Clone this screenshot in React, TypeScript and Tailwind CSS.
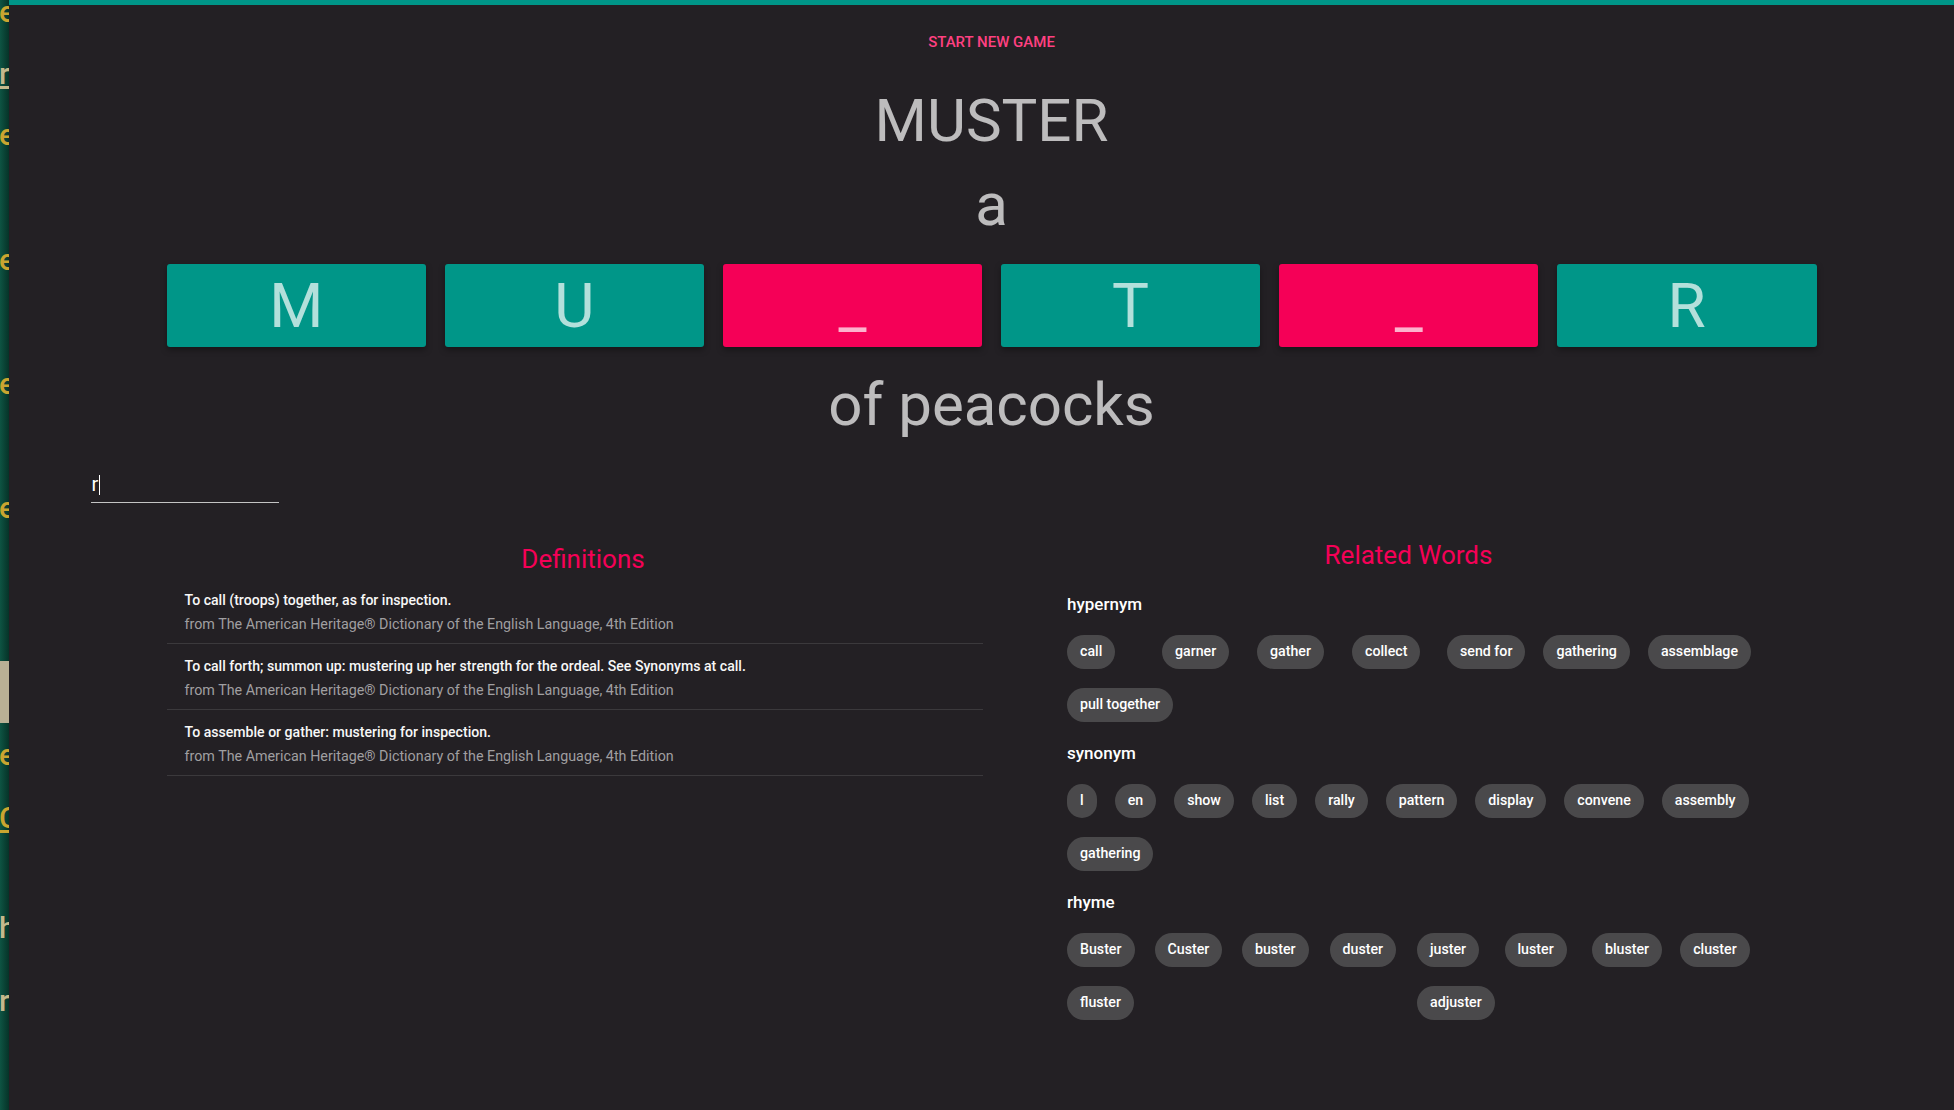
import React from "react";

const letters = [
  { ch: "M", found: true },
  { ch: "U", found: true },
  { ch: "_", found: false },
  { ch: "T", found: true },
  { ch: "_", found: false },
  { ch: "R", found: true },
];

const source = "from The American Heritage® Dictionary of the English Language, 4th Edition";

const definitions = [
  "To call (troops) together, as for inspection.",
  "To call forth; summon up: mustering up her strength for the ordeal. See Synonyms at call.",
  "To assemble or gather: mustering for inspection.",
];

const related = [
  {
    type: "hypernym",
    cell: "min-w-[77px]",
    words: ["call", "garner", "gather", "collect", "send for", "gathering", "assemblage", "pull together"],
  },
  {
    type: "synonym",
    cell: "",
    words: ["l", "en", "show", "list", "rally", "pattern", "display", "convene", "assembly", "gathering"],
  },
  {
    type: "rhyme",
    cell: "min-w-[69.5px]",
    words: ["Buster", "Custer", "buster", "duster", "juster", "luster", "bluster", "cluster", "fluster", "", "", "", "adjuster"],
  },
];

// bits of the window sitting behind, peeking out on the left edge
const behind = [
  { top: -5, ch: "e", tone: "text-[#c9a530]", line: false },
  { top: 57, ch: "r", tone: "text-[#c4b98c]", line: true },
  { top: 118, ch: "e", tone: "text-[#c9a530]", line: false },
  { top: 243, ch: "e", tone: "text-[#c9a530]", line: false },
  { top: 367, ch: "e", tone: "text-[#c9a530]", line: false },
  { top: 491, ch: "e", tone: "text-[#c9a530]", line: false },
  { top: 738, ch: "e", tone: "text-[#c9a530]", line: false },
  { top: 801, ch: "C", tone: "text-[#c9a530]", line: true },
  { top: 911, ch: "h", tone: "text-[#c4b98c]", line: false },
  { top: 984, ch: "r", tone: "text-[#c4b98c]", line: false },
];

function Chip({ word, cell }: { word: string; cell: string }) {
  return (
    <div className={cell}>
      {word && (
        <span className="inline-flex h-[34px] items-center rounded-full bg-[#4a494b] px-[13px] text-[14.2px] font-medium text-white">
          {word}
        </span>
      )}
    </div>
  );
}

export default function App() {
  return (
    <div className="flex min-h-screen font-['Roboto',sans-serif]">
      <div className="relative w-[9px] shrink-0 overflow-hidden bg-gradient-to-r from-[#0e5443] to-[#063328]">
        {behind.map((b, i) => (
          <span
            key={i}
            className={`absolute left-[-1px] text-[30px] font-medium leading-[34px] ${b.tone} ${b.line ? "underline" : ""}`}
            style={{ top: b.top }}
          >
            {b.ch}
          </span>
        ))}
        <div className="absolute left-0 top-[661px] h-[62px] w-[9px] bg-[#b9b095]" />
      </div>

      <div className="flex-1 bg-[#232024]">
        <div className="h-[5px] bg-[#009688]" />

        <div className="pl-[20px]">
          <div className="mt-[27px] text-center text-[15px] font-medium leading-[20px] text-[#ff4081]">
            START NEW GAME
          </div>

          <h1 className="mt-[27px] text-center text-[60px] leading-[84px] text-white/70">MUSTER</h1>
          <div className="text-center text-[60px] leading-[84px] text-white/70">a</div>

          <div className="mx-auto mt-[17px] grid w-[1650px] grid-cols-6 gap-[18.5px]">
            {letters.map((l, i) => (
              <div
                key={i}
                className={`flex h-[83px] items-center justify-center rounded-[3px] text-[62px] text-white/70 shadow-[0_3px_6px_rgba(0,0,0,0.35)] ${
                  l.found ? "bg-[#009688]" : "bg-[#f50057]"
                }`}
              >
                {l.ch}
              </div>
            ))}
          </div>

          <div className="mt-[16px] text-center text-[60px] leading-[84px] text-white/70">of peacocks</div>

          <div className="ml-[62px] mt-[26px] flex h-[30px] w-[188px] items-end border-b border-[#c4c4c4] pb-[8px] text-[20px] leading-[20px] text-white">
            <span className="pl-[0.5px]">r</span>
            <span className="mb-[-1px] ml-[1px] h-[20px] w-px bg-white" />
          </div>

          <div className="mx-auto mt-[36px] grid w-[1650px] grid-cols-2">
            <section className="pr-[9px]">
              <h2 className="mt-[4px] pl-[17px] text-center text-[26px] leading-[32px] text-[#f50057]">Definitions</h2>
              <ul className="mt-[3px]">
                {definitions.map((d, i) => (
                  <li key={i} className="border-b border-[#3b393c] px-[18px] pb-[9px] pt-[12px]">
                    <div className="text-[14.1px] font-medium leading-[20px] text-[#f7f7f7]">{d}</div>
                    <div className="mt-[4px] text-[14.3px] leading-[20px] text-[#a09fa1]">{source}</div>
                  </li>
                ))}
              </ul>
            </section>

            <section>
              <h2 className="pl-[9px] text-center text-[26px] leading-[32px] text-[#f50057]">Related Words</h2>
              <div className="mt-[20.5px] pl-[75.5px]">
                {related.map((g) => (
                  <div key={g.type} className="mb-[19px]">
                    <div className="text-[17px] font-medium leading-[24px] text-white">{g.type}</div>
                    <div className="mt-[19px] flex flex-wrap gap-x-[18px] gap-y-[19px]">
                      {g.words.map((w, i) => (
                        <Chip key={i} word={w} cell={g.cell} />
                      ))}
                    </div>
                  </div>
                ))}
              </div>
            </section>
          </div>
        </div>
      </div>
    </div>
  );
}
